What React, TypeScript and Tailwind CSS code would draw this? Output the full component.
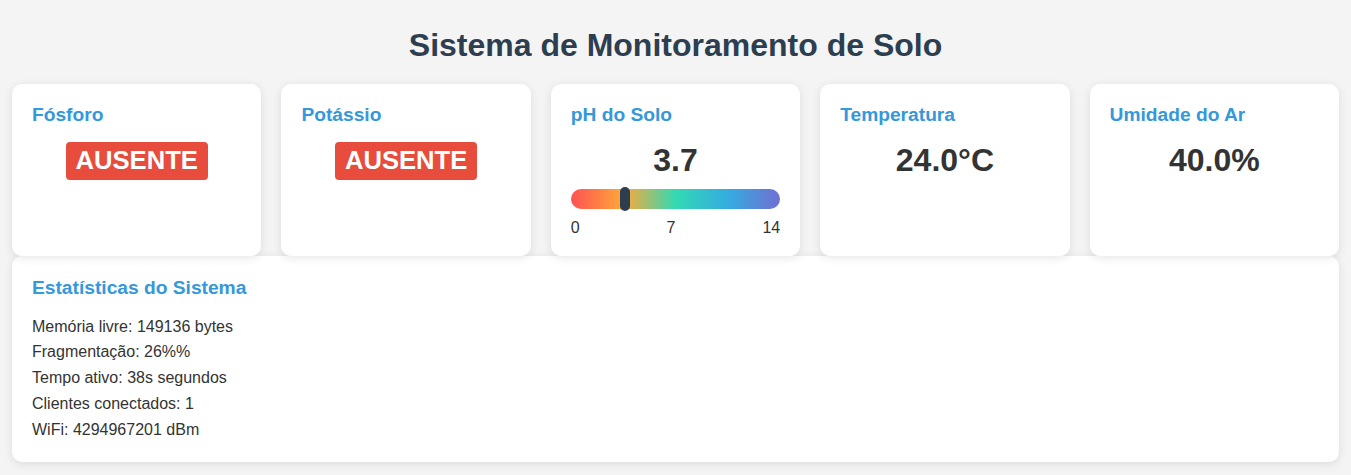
const font = { fontFamily: '"Liberation Sans", Arial, Helvetica, sans-serif' }

function Card({ title, children }: { title: string; children: React.ReactNode }) {
  return (
    <div className="bg-white rounded-[10px] p-5 h-[172px] shadow-[0_2px_10px_rgba(0,0,0,0.1)]">
      <h3 className="text-[19.2px] leading-[21.5px] font-bold text-[#3498db] mb-[15px]">{title}</h3>
      {children}
    </div>
  )
}

function Value({ children }: { children: React.ReactNode }) {
  return <div className="text-[32px] leading-[37px] font-bold text-[#333] text-center pt-px">{children}</div>
}

function Absent() {
  return (
    <div className="flex justify-center pt-[1.5px]">
      <span className="bg-[#e74c3c] text-white font-bold text-[25.6px] leading-[29.5px] px-[10px] py-[4px] rounded-[4px]">
        AUSENTE
      </span>
    </div>
  )
}

export default function App() {
  const ph = 3.7
  const stats = [
    'Memória livre: 149136 bytes',
    'Fragmentação: 26%%',
    'Tempo ativo: 38s segundos',
    'Clientes conectados: 1',
    'WiFi: 4294967201 dBm',
  ]

  return (
    <div className="min-h-[475px] bg-[#f4f4f4] px-3 pt-[27px] pb-[14px]" style={font}>
      <h1 className="text-[32px] leading-[37px] font-bold text-[#2c3e50] text-center mb-[20px]">
        Sistema de Monitoramento de Solo
      </h1>

      <div className="grid grid-cols-5 gap-5">
        <Card title="Fósforo">
          <Absent />
        </Card>
        <Card title="Potássio">
          <Absent />
        </Card>
        <Card title="pH do Solo">
          <Value>{ph.toFixed(1)}</Value>
          <div className="relative mt-[10px] h-5 rounded-full bg-[linear-gradient(to_right,#ff5252,#ffa83a_25%,#33d9b2_50%,#34ace0_75%,#706fd3)]">
            <div
              className="absolute top-[-2px] w-[10px] h-6 -ml-[6px] rounded-full bg-[#2c3e50]"
              style={{ left: `${(ph / 14) * 100}%` }}
            />
          </div>
          <div className="flex justify-between mt-[10px] text-[16px] leading-[18.5px] text-[#333]">
            <span>0</span>
            <span>7</span>
            <span>14</span>
          </div>
        </Card>
        <Card title="Temperatura">
          <Value>24.0°C</Value>
        </Card>
        <Card title="Umidade do Ar">
          <Value>40.0%</Value>
        </Card>
      </div>

      <div className="bg-white rounded-[10px] px-5 pt-[21px] pb-[20px] shadow-[0_2px_10px_rgba(0,0,0,0.1)]">
        <h3 className="text-[19.2px] leading-[21.5px] font-bold text-[#3498db] mb-[15px]">Estatísticas do Sistema</h3>
        <div className="text-[16px] leading-[25.75px] text-[#333]">
          {stats.map((s, i) => (
            <div key={i}>{s}</div>
          ))}
        </div>
      </div>
    </div>
  )
}
